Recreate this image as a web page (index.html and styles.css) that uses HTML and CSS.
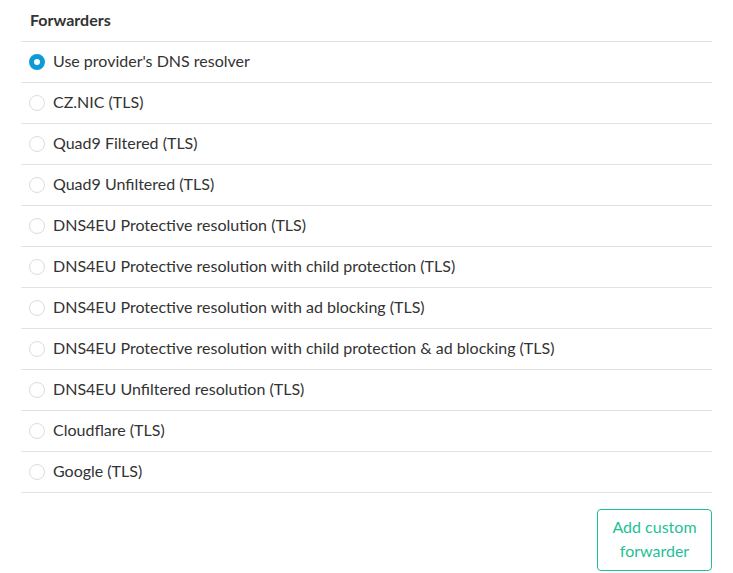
FILE: index.html
```html
<!DOCTYPE html>
<html>
<head>
<meta charset="utf-8">
<link rel="stylesheet" href="styles.css">
</head>
<body>
<div class="panel">
  <div class="header">Forwarders</div>
  <ul class="list">
    <li class="row"><span class="radio checked"></span><span class="label">Use provider's DNS resolver</span></li>
    <li class="row"><span class="radio"></span><span class="label">CZ.NIC (TLS)</span></li>
    <li class="row"><span class="radio"></span><span class="label">Quad9 Filtered (TLS)</span></li>
    <li class="row"><span class="radio"></span><span class="label">Quad9 Unfiltered (TLS)</span></li>
    <li class="row"><span class="radio"></span><span class="label">DNS4EU Protective resolution (TLS)</span></li>
    <li class="row"><span class="radio"></span><span class="label">DNS4EU Protective resolution with child protection (TLS)</span></li>
    <li class="row"><span class="radio"></span><span class="label">DNS4EU Protective resolution with ad blocking (TLS)</span></li>
    <li class="row"><span class="radio"></span><span class="label">DNS4EU Protective resolution with child protection &amp; ad blocking (TLS)</span></li>
    <li class="row"><span class="radio"></span><span class="label">DNS4EU Unfiltered resolution (TLS)</span></li>
    <li class="row"><span class="radio"></span><span class="label">Cloudflare (TLS)</span></li>
    <li class="row"><span class="radio"></span><span class="label">Google (TLS)</span></li>
  </ul>
  <div class="actions">
    <button class="btn">Add custom forwarder</button>
  </div>
</div>
</body>
</html>
```
FILE: styles.css
```css
* { box-sizing: border-box; }
html, body { margin: 0; padding: 0; background: #fff; }
body {
  font-family: Lato, "Noto Sans", sans-serif;
  font-size: 16px;
  color: #333;
}
.panel {
  margin-left: 21px;
  width: 691px;
}
.header {
  height: 42px;
  padding-left: 9px;
  display: flex;
  align-items: center;
  padding-bottom: 3px;
  font-weight: 700;
  border-bottom: 1px solid #e2e2e6;
}
.list { list-style: none; margin: 0; padding: 0; }
.row {
  height: 41px;
  display: flex;
  align-items: center;
  gap: 8px;
  padding-left: 8px;
  padding-bottom: 1px;
  border-bottom: 1px solid #e2e2e6;
}
.label { margin-bottom: 2px; }
.radio {
  width: 16px;
  height: 16px;
  border-radius: 50%;
  border: 1px solid #dcdce0;
  background: #fff;
  flex: none;
}
.radio.checked {
  border: 5px solid #0b9bd9;
}
.actions {
  display: flex;
  justify-content: flex-end;
  padding-top: 16px;
}
.btn {
  width: 115px;
  height: 62px;
  padding: 5px 10px 7px;
  font-family: inherit;
  font-size: 16px;
  line-height: 24px;
  color: #1fbf97;
  background: #fff;
  border: 1px solid #1fbf97;
  border-radius: 4px;
}
```
